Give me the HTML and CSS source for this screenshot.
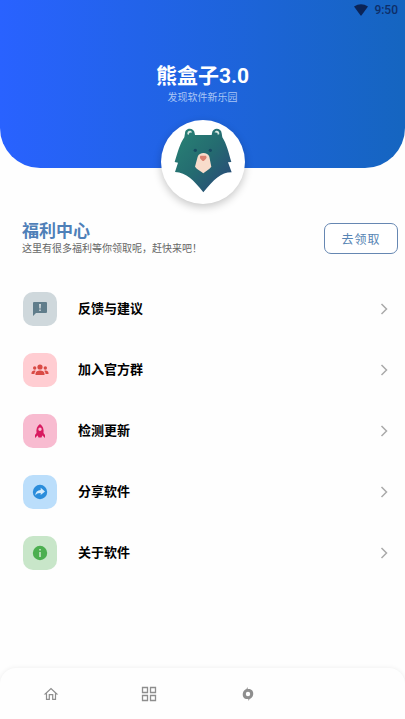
FILE: index.html
```html
<!DOCTYPE html>
<html lang="zh-CN">
<head>
<meta charset="utf-8">
<meta name="viewport" content="width=device-width, initial-scale=1">
<title>熊盒子3.0</title>
<link rel="stylesheet" href="styles.css">
</head>
<body>
<header class="hero">
  <div class="status">
    <svg class="wifi" viewBox="0 0 14 12" aria-hidden="true"><path d="M0 2.6Q7-2.2 14 2.6L7.6 11.3Q7 12 6.4 11.3Z"/></svg>
    <time>9:50</time>
  </div>
  <h1 class="app-name">熊盒子3.0</h1>
  <p class="tagline">发现软件新乐园</p>
  <div class="avatar">
    <svg viewBox="31 30 252 252" role="img" aria-label="熊盒子">
      <defs>
        <linearGradient id="fur" x1="0" y1="0" x2="1" y2="1">
          <stop offset="0.1" stop-color="#287f74"/>
          <stop offset="0.5" stop-color="#246b70"/>
          <stop offset="0.9" stop-color="#294b78"/>
        </linearGradient>
      </defs>
      <path fill="url(#fur)" d="M101 82L103 70C103 52 131 52 132 70L133 75H183L184 70C185 52 212 52 213 70L215 82C227 100 234 128 242 156L232 157L243 187C210 187 190 209 158 247C128 209 108 188 73 186L82 158L72 156C81 128 88 100 101 82Z"/>
      <path fill="#d5e6df" d="M110 73C109 60 123 60 124 68C119 66 114 69 115 74ZM206 73C207 60 193 60 192 68C197 66 202 69 201 74Z"/>
      <circle cx="134" cy="121" r="5" fill="#164b61"/>
      <circle cx="179" cy="121" r="5" fill="#164b61"/>
      <path fill="#f8dccb" d="M141 140C146 125 171 125 176 140L182 170C175 179 166 183 158 190C150 182 139 179 133 170Z"/>
      <path fill="#da8170" d="M149 137H166Q170 141 166 146L160 152Q158 154 155 152L149 146Q146 141 149 137Z"/>
    </svg>
  </div>
</header>

<main class="content">
  <section class="welfare">
    <div>
      <h2 class="welfare-title">福利中心</h2>
      <p class="welfare-text">这里有很多福利等你领取呢，赶快来吧！</p>
    </div>
    <button class="claim" type="button">去领取</button>
  </section>

  <ul class="menu">
    <li><a class="item" href="#feedback">
      <span class="tile slate"><svg viewBox="0 0 16 16" aria-hidden="true"><path fill="currentColor" d="M2 1H14Q15 1 15 2V11Q15 12 14 12H4L1 15V2Q1 1 2 1Z"/><path fill="#cfd8dc" d="M7 3H9L8.700 7.500H7.300ZM7.200 8.500H8.800V10H7.200Z"/></svg></span>
      <span class="label">反馈与建议</span>
      <svg class="chevron" viewBox="0 0 8 12" aria-hidden="true"><path d="M1.500 1L6.500 6L1.500 11"/></svg>
    </a></li>
    <li><a class="item" href="#group">
      <span class="tile red"><svg viewBox="0 0 18 16" aria-hidden="true"><g fill="currentColor"><circle cx="9" cy="5" r="2.600"/><circle cx="3.700" cy="6" r="1.700"/><circle cx="14.300" cy="6" r="1.700"/><path d="M4.500 13V11.500C4.500 7.500 13.500 7.500 13.500 11.500V13ZM.5 12V11C.5 9 3 8 4.800 9C3.600 10 3.500 11 3.500 12ZM17.500 12V11C17.500 9 15 8 13.200 9C14.400 10 14.500 11 14.500 12Z"/></g></svg></span>
      <span class="label">加入官方群</span>
      <svg class="chevron" viewBox="0 0 8 12" aria-hidden="true"><path d="M1.500 1L6.500 6L1.500 11"/></svg>
    </a></li>
    <li><a class="item" href="#update">
      <span class="tile pink"><svg viewBox="0 0 16 16" aria-hidden="true"><path fill="currentColor" fill-rule="evenodd" d="M8 1C11 3 12 6 11.500 10L13 12V15L10.500 12.500H5.500L3 15V12L4.500 10C4 6 5 3 8 1ZM8 4.500A1.700 1.700 0 1 0 8 7.900A1.700 1.700 0 1 0 8 4.500Z"/><path fill="currentColor" d="M5.500 12H10.500L9.500 14.500H6.500Z"/></svg></span>
      <span class="label">检测更新</span>
      <svg class="chevron" viewBox="0 0 8 12" aria-hidden="true"><path d="M1.500 1L6.500 6L1.500 11"/></svg>
    </a></li>
    <li><a class="item" href="#share">
      <span class="tile blue"><svg viewBox="0 0 16 16" aria-hidden="true"><circle cx="8" cy="8" r="7.200" fill="currentColor"/><path fill="#d5ebfb" d="M8.700 3.800L13 7.500L8.700 11V9C6 8.900 4.500 9.700 3.200 11.500C3.500 8 5.500 6.200 8.700 5.900Z"/></svg></span>
      <span class="label">分享软件</span>
      <svg class="chevron" viewBox="0 0 8 12" aria-hidden="true"><path d="M1.500 1L6.500 6L1.500 11"/></svg>
    </a></li>
    <li><a class="item" href="#about">
      <span class="tile green"><svg viewBox="0 0 16 16" aria-hidden="true"><circle cx="8" cy="8" r="7.200" fill="currentColor"/><path fill="#c8e6c9" d="M7.200 4H8.800V5.600H7.200ZM7.200 7H8.800V12H7.200Z"/></svg></span>
      <span class="label">关于软件</span>
      <svg class="chevron" viewBox="0 0 8 12" aria-hidden="true"><path d="M1.500 1L6.500 6L1.500 11"/></svg>
    </a></li>
  </ul>
</main>

<nav class="tabs">
  <a href="#home" aria-label="首页"><svg viewBox="0 0 16 16" aria-hidden="true"><path fill="none" stroke="currentColor" stroke-width="1.200" d="M2.200 8L8 2.500L13.800 8H12.500V13.300H9.700V8.700H6.300V13.300H3.500V8Z"/></svg></a>
  <a href="#apps" aria-label="分类"><svg viewBox="0 0 16 16" aria-hidden="true"><path fill="none" stroke="currentColor" stroke-width="1.300" d="M1.500 1.500H6.500V6.500H1.500ZM9.500 1.500H14.500V6.500H9.500ZM1.500 9.500H6.500V14.500H1.500ZM9.500 9.500H14.500V14.500H9.500Z"/></svg></a>
  <a href="#discover" aria-label="发现"><svg viewBox="0 0 16 16" aria-hidden="true"><path fill="currentColor" fill-rule="evenodd" d="M7.300 1L7.800 3C11.500 2.500 13.700 5 13.200 8.500C12.900 11 11 12.600 9.500 13L8.700 15L8.200 13C4.500 13.500 2.300 11 2.800 7.500C3.100 5 5 3.400 6.500 3ZM8 5.800A2.200 2.200 0 1 0 8 10.200A2.200 2.200 0 1 0 8 5.800Z"/></svg></a>
</nav>
</body>
</html>
```
FILE: styles.css
```css
* {
  box-sizing: border-box;
}

body {
  margin: 0;
  min-height: 100vh;
  display: flex;
  flex-direction: column;
  background: #fefefe;
  color: #000;
  font-family: Roboto, "Noto Sans CJK SC", sans-serif;
}

h1,
h2,
p,
ul {
  margin: 0;
  padding: 0;
}

.hero {
  display: flex;
  flex-direction: column;
  align-items: center;
  border-radius: 0 0 40px 40px;
  background: linear-gradient(90deg, #2962ff, #1565c0);
  color: #fff;
}

.status {
  align-self: stretch;
  display: flex;
  justify-content: flex-end;
  align-items: center;
  gap: 6px;
  height: 20px;
  padding-right: 7px;
  color: #0e2e68;
  font-size: 12px;
  font-weight: 500;
}

.wifi {
  width: 14px;
  height: 12px;
  fill: #0b2457;
}

.app-name {
  margin-top: 41px;
  font-size: 21px;
  line-height: 30px;
  font-weight: 700;
}

.tagline {
  font-size: 10px;
  line-height: 14px;
  color: #a9c5f5;
}

.avatar {
  width: 84px;
  height: 84px;
  margin-top: 15px;
  margin-bottom: -36px;
  border-radius: 50%;
  background: #fff;
  box-shadow: 0 3px 8px rgba(0, 0, 0, 0.22);
}

.avatar svg {
  display: block;
  width: 100%;
}

.content {
  padding: 52px 7px 24px 22px;
}

.welfare {
  display: flex;
  justify-content: space-between;
  align-items: center;
}

.welfare-title {
  font-size: 17px;
  line-height: 22px;
  font-weight: 700;
  color: #4f80b8;
}

.welfare-text {
  font-size: 10px;
  line-height: 14px;
  color: #666;
}

.claim {
  width: 74px;
  height: 31px;
  padding: 0;
  border: 1px solid #6687b2;
  border-radius: 7px;
  background: #fff;
  color: #5684b4;
  font: inherit;
  font-size: 12px;
  letter-spacing: 1px;
}

.menu {
  display: grid;
  gap: 27px;
  margin-top: 36px;
  list-style: none;
}

.item {
  display: flex;
  align-items: center;
  padding: 0 10px 0 1px;
  color: inherit;
  text-decoration: none;
}

.tile {
  display: grid;
  place-items: center;
  width: 34px;
  height: 34px;
  margin-right: 21px;
  border-radius: 10px;
}

.tile svg {
  height: 16px;
}

.slate {
  background: #cfd8dc;
  color: #607d8b;
}

.red {
  background: #ffcdd2;
  color: #d94a45;
}

.pink {
  background: #f8bbd0;
  color: #d81b60;
}

.blue {
  background: #bbdefb;
  color: #2b8ddb;
}

.green {
  background: #c8e6c9;
  color: #4caf50;
}

.label {
  flex: 1;
  font-size: 13px;
  line-height: 20px;
  font-weight: 700;
}

.chevron {
  width: 8px;
  height: 12px;
  fill: none;
  stroke: #aaa;
  stroke-width: 1.5px;
}

.tabs {
  display: grid;
  grid-template-columns: repeat(4, 1fr);
  height: 51px;
  margin-top: auto;
  padding: 0 10px 0 2px;
  border-radius: 16px 16px 0 0;
  background: #fefefe;
  box-shadow: 0 0 5px rgba(0, 0, 0, 0.07);
  color: #8e8e8e;
}

.tabs a {
  display: grid;
  place-items: center;
  color: inherit;
}

.tabs svg {
  width: 16px;
  height: 16px;
}
```
